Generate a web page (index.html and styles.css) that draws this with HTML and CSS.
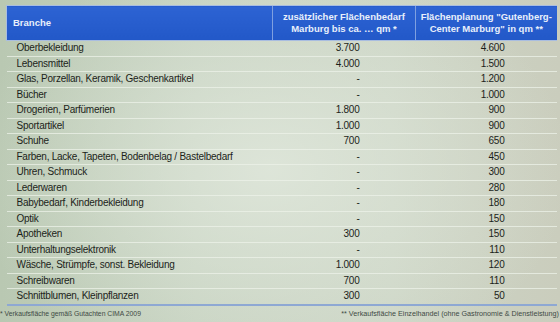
FILE: index.html
```html
<!DOCTYPE html>
<html lang="de">
<head>
<meta charset="utf-8">
<link rel="stylesheet" href="styles.css">
</head>
<body>
<div class="slide">
  <table class="tbl">
    <colgroup><col class="c1"><col class="c2"><col class="c3"></colgroup>
    <thead>
      <tr>
        <th class="h-left">Branche</th>
        <th>zusätzlicher Flächenbedarf<br>Marburg bis ca. … qm *</th>
        <th>Flächenplanung "Gutenberg-<br>Center Marburg" in qm **</th>
      </tr>
    </thead>
    <tbody>
      <tr><td>Oberbekleidung</td><td>3.700</td><td>4.600</td></tr>
      <tr><td>Lebensmittel</td><td>4.000</td><td>1.500</td></tr>
      <tr><td>Glas, Porzellan, Keramik, Geschenkartikel</td><td>-</td><td>1.200</td></tr>
      <tr><td>Bücher</td><td>-</td><td>1.000</td></tr>
      <tr><td>Drogerien, Parfümerien</td><td>1.800</td><td>900</td></tr>
      <tr><td>Sportartikel</td><td>1.000</td><td>900</td></tr>
      <tr><td>Schuhe</td><td>700</td><td>650</td></tr>
      <tr><td>Farben, Lacke, Tapeten, Bodenbelag / Bastelbedarf</td><td>-</td><td>450</td></tr>
      <tr><td>Uhren, Schmuck</td><td>-</td><td>300</td></tr>
      <tr><td>Lederwaren</td><td>-</td><td>280</td></tr>
      <tr><td>Babybedarf, Kinderbekleidung</td><td>-</td><td>180</td></tr>
      <tr><td>Optik</td><td>-</td><td>150</td></tr>
      <tr><td>Apotheken</td><td>300</td><td>150</td></tr>
      <tr><td>Unterhaltungselektronik</td><td>-</td><td>110</td></tr>
      <tr><td>Wäsche, Strümpfe, sonst. Bekleidung</td><td>1.000</td><td>120</td></tr>
      <tr><td>Schreibwaren</td><td>700</td><td>110</td></tr>
      <tr><td>Schnittblumen, Kleinpflanzen</td><td>300</td><td>50</td></tr>
    </tbody>
  </table>
  <div class="foot">
    <span class="fn-left">* Verkaufsfläche gemäß Gutachten CIMA 2009</span>
    <span class="fn-right">** Verkaufsfläche Einzelhandel (ohne Gastronomie &amp; Dienstleistung)</span>
  </div>
</div>
</body>
</html>
```

FILE: styles.css
```css
html, body {
  margin: 0;
  padding: 0;
}
body {
  width: 560px;
  height: 322px;
  overflow: hidden;
  font-family: "Liberation Sans", Arial, sans-serif;
  color: #1c1f1a;
  background:
    radial-gradient(ellipse 300px 220px at 270px 170px, rgba(226,233,222,0.8), rgba(226,233,222,0) 100%),
    linear-gradient(90deg, #b9c8b2 0%, #c6d2c0 35%, #ccd5c5 70%, #cacdbd 100%);
}
.slide {
  padding: 5px 4px 0 6px;
  display: flex;
  flex-direction: column;
}
.tbl {
  border-collapse: collapse;
  table-layout: fixed;
  width: 550px;
}
.c1 { width: 266px; }
.c2 { width: 143px; }
.c3 { width: 141px; }
thead th {
  height: 34px;
  padding: 0;
  background: linear-gradient(180deg, #2d63d3 0%, #2258c8 100%);
  color: #e9f0fb;
  font-size: 9.5px;
  font-weight: bold;
  line-height: 12px;
  text-align: center;
  border-left: 1px solid #7fa0e0;
  border-top: 1px solid #a9bde0;
  border-bottom: 1px solid #a9bde0;
}
thead th.h-left {
  text-align: left;
  padding-left: 6px;
  border-left: 1px solid #a9bde0;
}
tbody tr {
  height: 15.5px;
}
tbody td {
  height: 14.5px;
  padding: 0;
  font-size: 10px;
  letter-spacing: -0.25px;
  line-height: 14px;
  border-bottom: 1px solid rgba(236,242,232,0.75);
  white-space: nowrap;
}
tbody td:first-child {
  padding-left: 10px;
}
tbody td:nth-child(2) {
  text-align: right;
  padding-right: 56px;
}
tbody td:nth-child(3) {
  text-align: right;
  padding-right: 52px;
}
tbody tr:last-child td {
  border-bottom: 2px solid #8ea8d3;
}
.foot {
  display: flex;
  justify-content: space-between;
  align-items: center;
  margin: 3px -4px 0 -6px;
  color: #3e4a44;
  white-space: nowrap;
}
.fn-left {
  font-size: 6.8px;
}
.fn-right {
  font-size: 7.2px;
  padding-right: 1px;
}
```
